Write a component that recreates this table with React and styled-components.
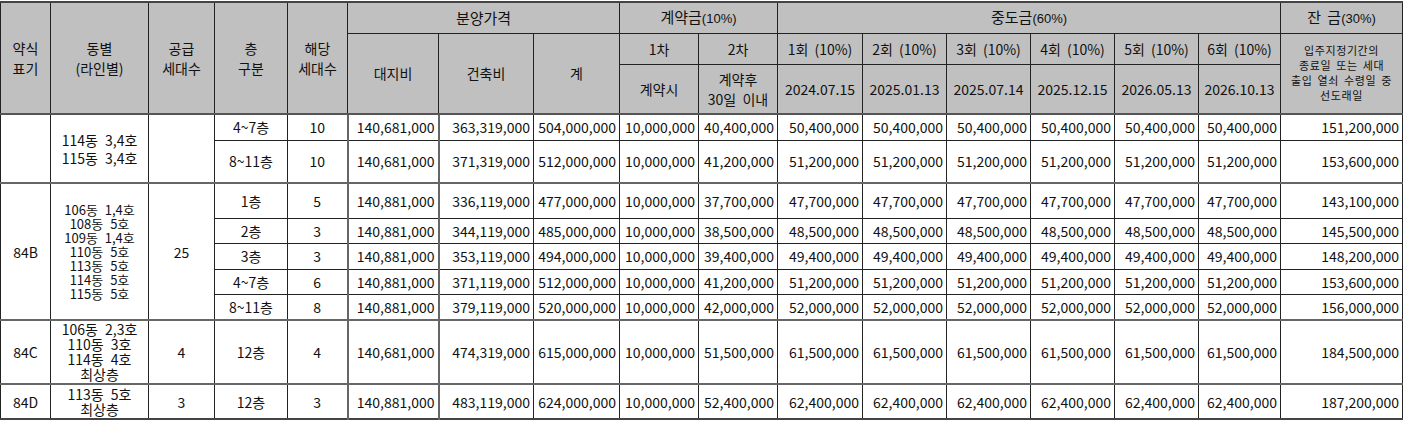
import React from "react";
import styled, { createGlobalStyle, css } from "styled-components";

const Global = createGlobalStyle`
  html, body { margin: 0; padding: 0; background: #fff; }
  body { font-family: "Noto Sans CJK KR", "Noto Sans", sans-serif; color: #111; }
`;

const Wrap = styled.div`
  padding-top: 1px;
  width: 1404px;
`;

const Table = styled.table`
  border-collapse: collapse;
  table-layout: fixed;
  width: 1402px;
  border-top: 2px solid #444;
  border-bottom: 2px solid #444;
  font-size: 14px;
`;

const HeadRow = styled.tr`
  height: ${(p) => p.$h}px;
`;

const BodyRow = styled.tr`
  height: ${(p) => p.$h}px;
`;

const Th = styled.th`
  background: #c0c0c0;
  border: 1px solid #222;
  font-weight: 400;
  font-size: ${(p) => (p.$big ? 15 : 14)}px;
  line-height: 20px;
  padding: 0;
  text-align: center;
  vertical-align: middle;
  white-space: nowrap;
  word-spacing: 3px;
  ${(p) =>
    p.$heavyBottom &&
    css`
      border-bottom: 2px solid #555;
    `}
`;

const Pct = styled.span`
  font-family: "Liberation Sans", sans-serif;
  font-size: 13px;
  word-spacing: 0;
`;

const Note = styled.div`
  font-size: 11px;
  line-height: 15px;
  letter-spacing: 0.6px;
  word-spacing: 2px;
  white-space: nowrap;
`;

const Td = styled.td`
  border: 1px solid #222;
  padding: 0 ${(p) => (p.$align === "right" ? "3px" : "2px")} 0 2px;
  text-align: ${(p) => p.$align || "center"};
  vertical-align: middle;
  white-space: nowrap;
  line-height: ${(p) => p.$lh || 18}px;
  ${(p) =>
    p.$dong &&
    css`
      word-spacing: 4px;
      font-size: ${p.$lh < 15 ? 13 : 14}px;
    `}
  ${(p) =>
    p.$groupTop &&
    css`
      border-top: 2px solid #666;
    `}
  ${(p) =>
    p.$heavyLeft &&
    css`
      border-left: 2px solid #666;
    `}
`;

const widths = [50, 98, 66, 73, 60, 91, 95, 86, 79, 79, 85, 84, 84, 84, 84, 82, 122];

const rows = [
  {
    h: 26,
    group: { type: "", dong: ["114동 3,4호", "115동 3,4호"], supply: "", span: 2, lh: 18 },
    floor: "4~7층", n: "10",
    v: ["140,681,000", "363,319,000", "504,000,000", "10,000,000", "40,400,000", "50,400,000", "151,200,000"],
  },
  {
    h: 43, floor: "8~11층", n: "10",
    v: ["140,681,000", "371,319,000", "512,000,000", "10,000,000", "41,200,000", "51,200,000", "153,600,000"],
  },
  {
    h: 35,
    group: {
      type: "84B",
      dong: ["106동 1,4호", "108동 5호", "109동 1,4호", "110동 5호", "113동 5호", "114동 5호", "115동 5호"],
      supply: "25", span: 5, lh: 14,
    },
    floor: "1층", n: "5",
    v: ["140,881,000", "336,119,000", "477,000,000", "10,000,000", "37,700,000", "47,700,000", "143,100,000"],
  },
  {
    h: 25, floor: "2층", n: "3",
    v: ["140,881,000", "344,119,000", "485,000,000", "10,000,000", "38,500,000", "48,500,000", "145,500,000"],
  },
  {
    h: 26, floor: "3층", n: "3",
    v: ["140,881,000", "353,119,000", "494,000,000", "10,000,000", "39,400,000", "49,400,000", "148,200,000"],
  },
  {
    h: 25, floor: "4~7층", n: "6",
    v: ["140,881,000", "371,119,000", "512,000,000", "10,000,000", "41,200,000", "51,200,000", "153,600,000"],
  },
  {
    h: 26, floor: "8~11층", n: "8",
    v: ["140,881,000", "379,119,000", "520,000,000", "10,000,000", "42,000,000", "52,000,000", "156,000,000"],
  },
  {
    h: 64,
    group: { type: "84C", dong: ["106동 2,3호", "110동 3호", "114동 4호", "최상층"], supply: "4", span: 1, lh: 15 },
    floor: "12층", n: "4",
    v: ["140,681,000", "474,319,000", "615,000,000", "10,000,000", "51,500,000", "61,500,000", "184,500,000"],
  },
  {
    h: 35,
    group: { type: "84D", dong: ["113동 5호", "최상층"], supply: "3", span: 1, lh: 15 },
    floor: "12층", n: "3",
    v: ["140,881,000", "483,119,000", "624,000,000", "10,000,000", "52,400,000", "62,400,000", "187,200,000"],
  },
];

const installments = [
  ["1회", "2024.07.15"],
  ["2회", "2025.01.13"],
  ["3회", "2025.07.14"],
  ["4회", "2025.12.15"],
  ["5회", "2026.05.13"],
  ["6회", "2026.10.13"],
];

const noteLines = ["입주지정기간의", "종료일 또는 세대", "출입 열쇠 수령일 중", "선도래일"];

function Lines({ items }) {
  return items.map((t, i) => (
    <React.Fragment key={i}>
      {i > 0 && <br />}
      {t}
    </React.Fragment>
  ));
}

export default function App() {
  return (
    <Wrap>
      <Global />
      <Table>
        <colgroup>
          {widths.map((w, i) => (
            <col key={i} style={{ width: w }} />
          ))}
        </colgroup>
        <thead>
          <HeadRow $h={31}>
            <Th rowSpan={3} $heavyBottom>약식<br />표기</Th>
            <Th rowSpan={3} $heavyBottom>동별<br />(라인별)</Th>
            <Th rowSpan={3} $heavyBottom>공급<br />세대수</Th>
            <Th rowSpan={3} $heavyBottom>층<br />구분</Th>
            <Th rowSpan={3} $heavyBottom>해당<br />세대수</Th>
            <Th colSpan={3} $big>분양가격</Th>
            <Th colSpan={2} $big>계약금<Pct>(10%)</Pct></Th>
            <Th colSpan={6} $big>중도금<Pct>(60%)</Pct></Th>
            <Th $big>잔 금<Pct>(30%)</Pct></Th>
          </HeadRow>
          <HeadRow $h={31}>
            <Th rowSpan={2} $heavyBottom>대지비</Th>
            <Th rowSpan={2} $heavyBottom>건축비</Th>
            <Th rowSpan={2} $heavyBottom>계</Th>
            <Th>1차</Th>
            <Th>2차</Th>
            {installments.map(([k]) => (
              <Th key={k}>{k} (10%)</Th>
            ))}
            <Th rowSpan={2} $heavyBottom>
              <Note>
                <Lines items={noteLines} />
              </Note>
            </Th>
          </HeadRow>
          <HeadRow $h={50}>
            <Th $heavyBottom>계약시</Th>
            <Th $heavyBottom>계약후<br />30일 이내</Th>
            {installments.map(([k, d]) => (
              <Th key={k} $heavyBottom>{d}</Th>
            ))}
          </HeadRow>
        </thead>
        <tbody>
          {rows.map((r, i) => {
            const g = r.group;
            const top = !!g;
            const [land, build, sum, first, second, mid, rest] = r.v;
            return (
              <BodyRow key={i} $h={r.h}>
                {g && (
                  <>
                    <Td rowSpan={g.span} $groupTop>{g.type}</Td>
                    <Td rowSpan={g.span} $groupTop $dong $lh={g.lh}>
                      <Lines items={g.dong} />
                    </Td>
                    <Td rowSpan={g.span} $groupTop>{g.supply}</Td>
                  </>
                )}
                <Td $groupTop={top}>{r.floor}</Td>
                <Td $groupTop={top}>{r.n}</Td>
                <Td $groupTop={top} $align="right" $heavyLeft>{land}</Td>
                <Td $groupTop={top} $align="right" $heavyLeft>{build}</Td>
                <Td $groupTop={top} $align="right">{sum}</Td>
                <Td $groupTop={top} $align="right">{first}</Td>
                <Td $groupTop={top} $align="right">{second}</Td>
                {installments.map(([k]) => (
                  <Td key={k} $groupTop={top} $align="right">{mid}</Td>
                ))}
                <Td $groupTop={top} $align="right">{rest}</Td>
              </BodyRow>
            );
          })}
        </tbody>
      </Table>
    </Wrap>
  );
}
